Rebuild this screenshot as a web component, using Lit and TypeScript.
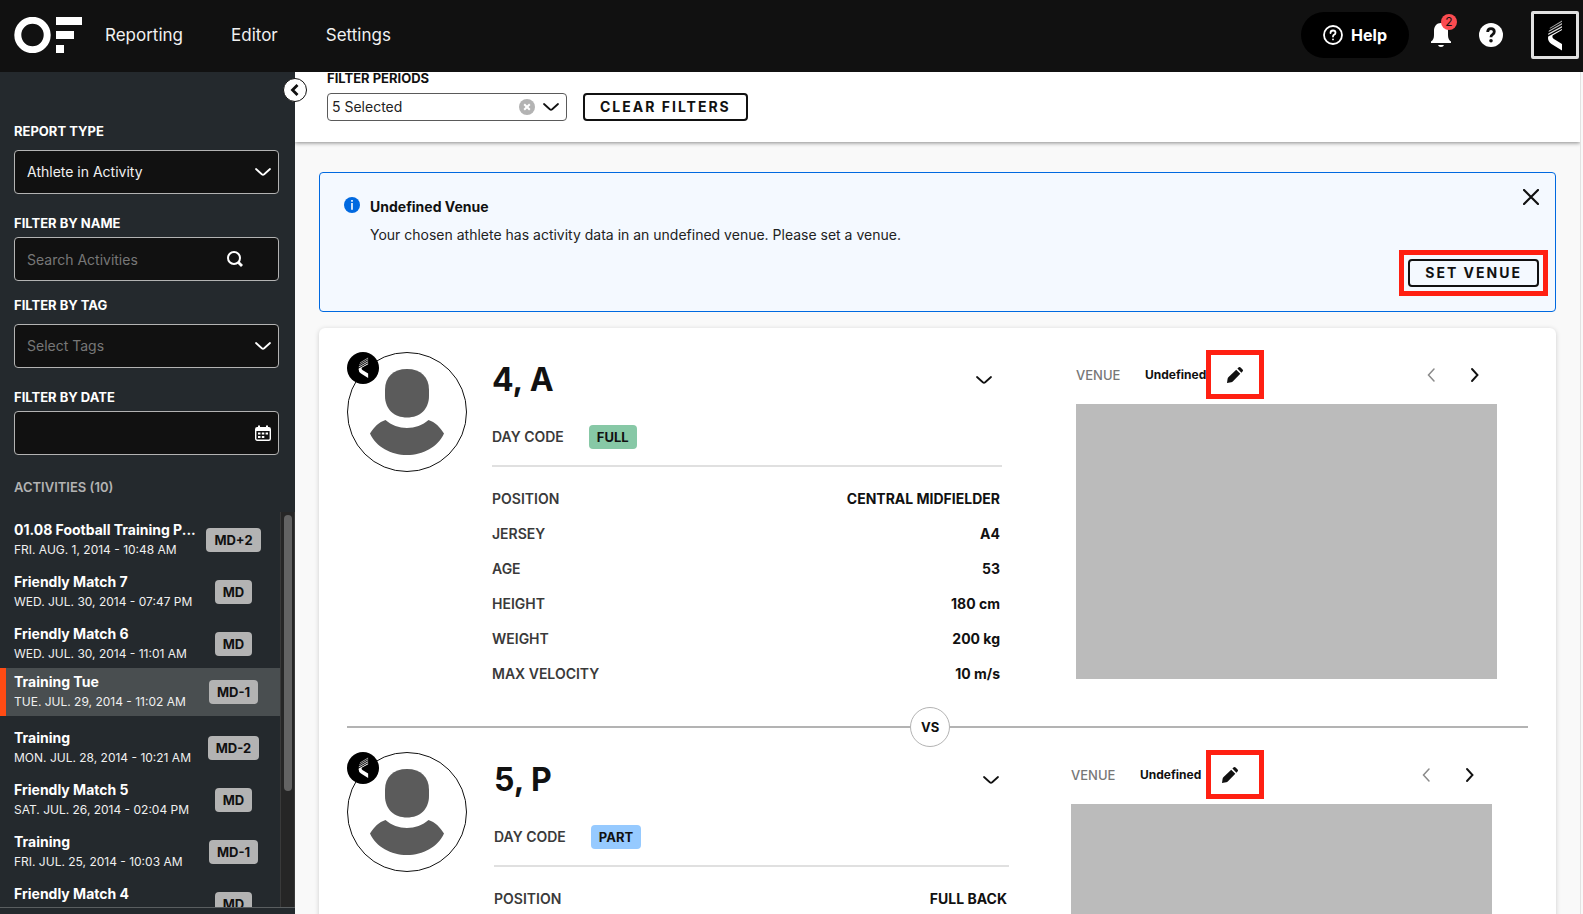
import { LitElement, html, css, svg, nothing } from "lit";
import { customElement, property } from "lit/decorators.js";
import { classMap } from "lit/directives/class-map.js";

interface Activity {
  title: string;
  date: string;
  code: string;
  selected?: boolean;
}

interface Athlete {
  name: string;
  dayCode: string;
  stats: [string, string][];
}

const activities: Activity[] = [
  { title: "01.08 Football Training P...", date: "FRI. AUG. 1, 2014 - 10:48 AM", code: "MD+2" },
  { title: "Friendly Match 7", date: "WED. JUL. 30, 2014 - 07:47 PM", code: "MD" },
  { title: "Friendly Match 6", date: "WED. JUL. 30, 2014 - 11:01 AM", code: "MD" },
  { title: "Training Tue", date: "TUE. JUL. 29, 2014 - 11:02 AM", code: "MD-1", selected: true },
  { title: "Training", date: "MON. JUL. 28, 2014 - 10:21 AM", code: "MD-2" },
  { title: "Friendly Match 5", date: "SAT. JUL. 26, 2014 - 02:04 PM", code: "MD" },
  { title: "Training", date: "FRI. JUL. 25, 2014 - 10:03 AM", code: "MD-1" },
  { title: "Friendly Match 4", date: "", code: "MD" },
];

const first: Athlete = {
  name: "4, A",
  dayCode: "FULL",
  stats: [
    ["POSITION", "CENTRAL MIDFIELDER"],
    ["JERSEY", "A4"],
    ["AGE", "53"],
    ["HEIGHT", "180 cm"],
    ["WEIGHT", "200 kg"],
    ["MAX VELOCITY", "10 m/s"],
  ],
};

const second: Athlete = {
  name: "5, P",
  dayCode: "PART",
  stats: [["POSITION", "FULL BACK"]],
};

const chevronDown = html`<svg class="icon" width="16" height="16" viewBox="0 0 16 16" aria-hidden="true">
  <path d="M1 5 L6.8 10.2 Q8 11.2 9.2 10.2 L15 5" fill="none" stroke="currentColor" stroke-width="1.800" stroke-linecap="round" />
</svg>`;

/* Feathered chevron mark of the club */
const clubMark = svg`
  <path d="M23 10 L23 11.200 L10.500 18.600 L11.500 17 Z" fill="#aaa" />
  <path d="M23 12.600 L23 14 L9.500 21.600 L10 20 Z" fill="#bbb" />
  <path d="M23 15.400 L23 17 L9.200 24.600 L9.300 23 Z" fill="#ddd" />
  <path d="M23 18.400 L23 19.600 L13.500 25 Q12.800 27 14.500 28.200 L23 33.500 L23 40 L12.500 33.500 Q9 31 9 27.500 L9.200 26 Z" fill="#fff" />`;

const shared = css`
  * {
    box-sizing: border-box;
  }
  button,
  input,
  select {
    font: inherit;
    color: inherit;
    margin: 0;
  }
  button {
    background: none;
    border: 0;
    padding: 0;
    cursor: pointer;
  }
  svg {
    display: block;
    flex: none;
  }
`;

@customElement("athlete-panel")
export class AthletePanel extends LitElement {
  @property({ attribute: false }) athlete!: Athlete;
  @property({ type: Boolean, reflect: true }) compared = false;

  static styles = [
    shared,
    css`
      :host {
        display: grid;
        grid-template-columns: 120px minmax(0, 609fr) minmax(0, 421fr);
        padding-right: 31px;
        align-items: start;
      }
      :host([compared]) {
        grid-template-columns: 120px minmax(0, 604fr) minmax(0, 421fr);
        padding-right: 36px;
      }
      .details {
        margin: 0 74px 0 25px;
      }
      :host([compared]) .details {
        margin: 0 62px 0 27px;
      }
      .avatar {
        width: 120px;
        height: 120px;
      }
      .title {
        display: flex;
        align-items: center;
        justify-content: space-between;
        height: 56px;
        padding-right: 10px;
      }
      h2 {
        margin: 0;
        font-size: 32px;
        line-height: 40px;
        font-weight: 700;
      }
      .day {
        display: flex;
        align-items: center;
        gap: 25px;
        height: 59px;
        margin-bottom: 14px;
        border-bottom: 2px solid #e0e0e0;
      }
      .day,
      dl {
        font-size: 14px;
        line-height: 20px;
        font-weight: 600;
        color: #3a3a3a;
      }
      .chip {
        padding: 2px 8px;
        border-radius: 4px;
        background: #87c8a6;
        color: #111;
        font-size: 13px;
        font-weight: 700;
      }
      .part {
        background: #96caff;
      }
      dl {
        margin: 0;
        padding: 0 2px 1px 0;
      }
      .stat {
        display: flex;
        align-items: center;
        justify-content: space-between;
        height: 35px;
      }
      dd {
        margin: 0;
        font-weight: 700;
        color: #111;
      }
      .venue {
        display: grid;
        grid-template-columns: 69px 61px 58px 1fr auto;
        align-content: center;
        align-items: center;
        height: 45px;
        margin-bottom: 7px;
        font-size: 12px;
        line-height: 20px;
        font-weight: 700;
      }
      :host([compared]) .venue {
        grid-template-columns: 69px 66px 58px 1fr auto;
      }
      .venue-label {
        color: #777;
        font-size: 13px;
        font-weight: 500;
      }
      .edit {
        display: flex;
        align-items: center;
        justify-content: center;
        height: 49px;
        border: 5px solid #ff2012;
      }
      :host([compared]) .edit {
        padding-right: 10px;
      }
      .pager {
        grid-column: 5;
        display: flex;
        gap: 28px;
        padding-right: 14px;
      }
      .prev {
        color: #8a8a8a;
      }
      .map {
        aspect-ratio: 421 / 275;
        background: #bbb;
      }
    `,
  ];

  render() {
    const a = this.athlete;
    return html`
      <svg class="avatar" viewBox="0 0 120 120" role="img" aria-label="Athlete avatar">
        <circle cx="60" cy="60" r="59.500" fill="#fff" stroke="#111" />
        <path d="M60 17 C74 17 82 25 82 38 V44 C82 57 73 65.500 60 65.500 C47 65.500 38 57 38 44 V38 C38 25 46 17 60 17 Z" fill="#5b5b5b" />
        <path d="M38.500 68 C50 78.500 70 78.500 81.500 68 C88 70 93 75 97 81.500 C91 95 76 103 60 103 C44 103 29 95 23 81.500 C27 75 32 70 38.500 68 Z" fill="#5b5b5b" />
        <circle cx="16" cy="16" r="16" fill="#000" />
        <g transform="translate(5.500 -1.200) scale(0.680)">${clubMark}</g>
      </svg>
      <div class="details">
        <div class="title">
          <h2>${a.name}</h2>
          <button aria-label="Change athlete">${chevronDown}</button>
        </div>
        <div class="day">
          <span>DAY CODE</span>
          <span class=${classMap({ chip: true, part: a.dayCode === "PART" })}>${a.dayCode}</span>
        </div>
        <dl>
          ${a.stats.map(([k, v]) => html`<div class="stat"><dt>${k}</dt><dd>${v}</dd></div>`)}
        </dl>
      </div>
      <div>
        <div class="venue">
          <span class="venue-label">VENUE</span>
          <span>Undefined</span>
          <button class="edit" aria-label="Edit venue">
            <svg width="18" height="18" viewBox="0 0 18 18">
              <path d="M1 17 L1.600 12.800 Q1.800 11.800 2.600 11 L10.200 3.700 L14.300 7.800 L7 15.200 Q6.200 16 5.200 16.200 Z M11.400 2.600 L12.800 1.200 Q13.700 0.500 14.600 1.400 L16.600 3.400 Q17.500 4.300 16.700 5.300 L15.400 6.700 Z" fill="#111" />
            </svg>
          </button>
          <div class="pager">
            <button class="prev" aria-label="Previous venue">
              <svg width="16" height="16" viewBox="0 0 16 16"><path d="M11 2 L5.500 8 L11 14" fill="none" stroke="currentColor" stroke-width="1.500" stroke-linecap="round" /></svg>
            </button>
            <button aria-label="Next venue">
              <svg width="16" height="16" viewBox="0 0 16 16"><path d="M5 2 L10.500 8 L5 14" fill="none" stroke="currentColor" stroke-width="1.900" stroke-linecap="round" /></svg>
            </button>
          </div>
        </div>
        <div class="map"></div>
      </div>
    `;
  }
}

@customElement("app-root")
export class AppRoot extends LitElement {
  static styles = [
    shared,
    css`
      :host {
        display: flex;
        flex-direction: column;
        height: 100vh;
        overflow: hidden;
        font-family: Inter, "Liberation Sans", sans-serif;
        font-size: 14px;
        line-height: 20px;
        color: #111;
        background: #f9f9f9;
      }
      header {
        display: flex;
        align-items: center;
        flex: none;
        height: 72px;
        padding: 0 4px 2px 14px;
        background: #111;
        color: #fff;
      }
      nav {
        display: flex;
        gap: 48px;
        margin-left: 23px;
        font-size: 17px;
      }
      nav a {
        color: #f0f0f0;
        text-decoration: none;
      }
      .tools {
        display: flex;
        align-items: center;
        margin-left: auto;
      }
      .help {
        display: flex;
        align-items: center;
        gap: 8px;
        height: 46px;
        padding: 0 22px;
        border-radius: 23px;
        background: #000;
        font-size: 16px;
        font-weight: 700;
      }
      .bell {
        position: relative;
        margin: 0 28px 0 22px;
      }
      .count {
        position: absolute;
        top: -9px;
        right: -6px;
        width: 16px;
        height: 16px;
        border-radius: 50%;
        background: #fb4b50;
        color: #111;
        font-size: 12px;
        line-height: 16px;
        text-align: center;
      }
      .club {
        display: flex;
        align-items: center;
        justify-content: center;
        width: 48px;
        height: 48px;
        margin-left: 28px;
        border: 3px solid #e0e0e0;
        border-radius: 2px;
        background: #000;
      }
      .body {
        display: flex;
        flex: 1;
        min-height: 0;
      }
      aside {
        position: relative;
        display: flex;
        flex-direction: column;
        flex: none;
        width: 295px;
        padding: 49px 0 6px;
        background: #24292d;
        color: #fff;
      }
      .collapse {
        position: absolute;
        z-index: 1;
        top: 6px;
        right: -12px;
        display: flex;
        align-items: center;
        justify-content: center;
        width: 24px;
        height: 24px;
        border: 1px solid #111;
        border-radius: 50%;
        background: #fff;
        color: #111;
      }
      .field {
        display: flex;
        flex-direction: column;
        gap: 4px;
        padding: 0 16px 0 14px;
        margin-bottom: 19px;
      }
      .loose {
        gap: 9px;
      }
      .tight {
        margin-bottom: 14px;
      }
      .label {
        font-size: 13px;
        font-weight: 700;
        line-height: 20px;
      }
      /* Control and its icon share one grid cell */
      .control {
        display: grid;
        align-items: center;
      }
      .control > * {
        grid-area: 1 / 1;
      }
      .control svg {
        justify-self: end;
        margin-right: 8px;
        pointer-events: none;
      }
      .control .search {
        margin-right: 36px;
      }
      .control input,
      .control select {
        appearance: none;
        width: 100%;
        height: 44px;
        padding: 0 12px;
        border: 1px solid #b3b3b3;
        border-radius: 4px;
        background: #111;
        color: #f0f0f0;
      }
      .control .empty,
      .control input::placeholder {
        color: #777;
        opacity: 1;
      }
      h3 {
        margin: 0;
        padding: 3px 14px 15px;
        font-size: 13px;
        line-height: 20px;
        font-weight: 600;
        color: #b3b3b3;
      }
      .scroller {
        display: flex;
        flex: 1;
        min-height: 0;
        overflow: hidden;
        border-bottom: 1px solid #5a5e60;
      }
      ul {
        display: flex;
        flex-direction: column;
        flex: 1;
        min-width: 0;
        margin: 0;
        padding: 0;
        list-style: none;
      }
      li {
        display: grid;
        grid-template-columns: 186px 1fr;
        align-items: center;
        flex: none;
        height: 48px;
        margin-top: 4px;
        padding: 0 13px 0 8px;
        border-left: 6px solid transparent;
      }
      li.selected {
        margin: 0 0 4px;
        border-color: #ff4b14;
        background: #494e50;
      }
      .name {
        font-weight: 700;
        white-space: nowrap;
      }
      .date {
        min-height: 20px;
        font-size: 12px;
        line-height: 20px;
        white-space: nowrap;
        color: #f0f0f0;
      }
      .code {
        justify-self: center;
        padding: 2px 8px;
        border-radius: 4px;
        background: #b3b3b3;
        color: #111;
        font-size: 13px;
        line-height: 20px;
        font-weight: 700;
      }
      .track {
        width: 15px;
        padding: 3px 3px 0;
        border-left: 1px solid #3a3a3a;
        border-right: 1px solid #3a3a3a;
        background: #262626;
      }
      .thumb {
        width: 8px;
        height: 276px;
        border-radius: 4px;
        background: #636363;
      }
      main {
        flex: 1;
        min-width: 0;
        margin-right: 2px;
        border-right: 1px solid #e2e2e2;
        overflow: hidden;
      }
      .filters {
        display: grid;
        grid-template-columns: 240px auto;
        justify-content: start;
        column-gap: 16px;
        row-gap: 8px;
        padding: 0 32px 21px;
        background: #fff;
        box-shadow: 0 1px 4px rgba(0, 0, 0, 0.45);
      }
      .filters .label {
        grid-column: 1 / 3;
        line-height: 13px;
      }
      .filters .control select {
        height: 28px;
        padding: 0 4px;
        border-color: #5a5a5a;
        background: #fff;
        color: #222;
      }
      .filters .control .clear {
        margin-right: 32px;
      }
      .outline {
        display: block;
        height: 28px;
        padding: 0 15px;
        border: 2px solid #111;
        border-radius: 4px;
        font-weight: 700;
        letter-spacing: 2px;
        line-height: 20px;
      }
      .content {
        display: flex;
        flex-direction: column;
        gap: 16px;
        padding: 30px 24px 0;
      }
      .alert {
        display: grid;
        grid-template-columns: 16px 1fr auto;
        column-gap: 10px;
        padding: 16px 16px 24px 24px;
        border: 1px solid #0069e0;
        border-radius: 4px;
        background: #f4f9ff;
      }
      .info {
        margin-top: 8px;
      }
      .message {
        padding-top: 8px;
      }
      .message p {
        margin: 0 0 8px;
        color: #222;
      }
      .message .heading {
        font-weight: 700;
        color: #111;
      }
      .alert .close {
        justify-self: end;
        align-self: start;
      }
      .marked {
        grid-column: 1 / 4;
        justify-self: end;
        margin-top: 6px;
        outline: 5px solid #ff2012;
        outline-offset: 4px;
      }
      .card {
        padding: 24px 28px;
        border-radius: 6px;
        background: #fff;
        box-shadow: 0 1px 5px rgba(0, 0, 0, 0.18);
      }
      .versus {
        display: flex;
        align-items: center;
        margin: 15px 0 5px;
      }
      .line {
        flex: 38;
        height: 2px;
        background: #b3b3b3;
      }
      .line.after {
        flex: 39;
      }
      .vs {
        width: 40px;
        height: 40px;
        border: 1px solid #b3b3b3;
        border-radius: 50%;
        font-size: 13px;
        line-height: 38px;
        font-weight: 700;
        text-align: center;
      }
    `,
  ];

  render() {
    return html`
      <header>
        <svg width="68" height="36" viewBox="0 0 68 36" role="img" aria-label="OF">
          <circle cx="18.500" cy="18" r="14.700" fill="none" stroke="#fff" stroke-width="7" />
          <path d="M42 0 H68 V8 H42 Z M42 14 H60 V22 H42 Z M42 28 H50 V36 H42 Z" fill="#fff" />
        </svg>
        <nav>
          <a href="#reporting">Reporting</a>
          <a href="#editor">Editor</a>
          <a href="#settings">Settings</a>
        </nav>
        <div class="tools">
          <button class="help">
            <svg width="20" height="20" viewBox="0 0 20 20" fill="none" stroke="#fff" stroke-width="1.800" stroke-linecap="round">
              <circle cx="10" cy="10" r="9" />
              <path d="M7.500 8 Q7.500 5.500 10 5.500 Q12.500 5.500 12.500 7.700 Q12.500 9 11 9.800 Q10 10.400 10 11.500 M10 14.300 V14.400" />
            </svg>
            Help
          </button>
          <button class="bell" aria-label="Notifications">
            <svg width="20" height="24" viewBox="0 0 20 24" fill="#fff">
              <path d="M10 0 C14.500 0 17 3.500 17 8 V12 C17 15 18 17.500 20 18.500 V20 H0 V18.500 C2 17.500 3 15 3 12 V8 C3 3.500 5.500 0 10 0 Z M7 22 H13 Q12.500 24 10 24 Q7.500 24 7 22 Z" />
            </svg>
            <span class="count">2</span>
          </button>
          <button aria-label="Support">
            <svg width="24" height="24" viewBox="0 0 24 24">
              <circle cx="12" cy="12" r="12" fill="#fff" />
              <path d="M8.700 9 Q8.700 5.700 12 5.700 Q15.300 5.700 15.300 8.800 Q15.300 10.500 13.500 11.600 Q12 12.500 12 14.200" fill="none" stroke="#111" stroke-width="2.800" />
              <circle cx="12" cy="17.700" r="1.800" fill="#111" />
            </svg>
          </button>
          <button class="club" aria-label="Club account">
            <svg width="32" height="42" viewBox="0 3.500 32 42">${clubMark}</svg>
          </button>
        </div>
      </header>
      <div class="body">
        <aside>
          <button class="collapse" aria-label="Collapse sidebar">
            <svg width="12" height="14" viewBox="0 0 12 14"><path d="M8.500 2 L3.500 7 L8.500 12" fill="none" stroke="currentColor" stroke-width="2.800" /></svg>
          </button>
          <div class="field loose">
            <label class="label" for="type">REPORT TYPE</label>
            <div class="control">
              <select id="type"><option>Athlete in Activity</option></select>
              ${chevronDown}
            </div>
          </div>
          <div class="field tight">
            <label class="label" for="name">FILTER BY NAME</label>
            <div class="control">
              <input id="name" type="text" placeholder="Search Activities" />
              <svg class="search" width="16" height="16" viewBox="0 0 16 16" fill="none" stroke="#fff">
                <circle cx="7" cy="7" r="6" stroke-width="2" />
                <path d="M11 11 L15 15" stroke-width="2.800" />
              </svg>
            </div>
          </div>
          <div class="field loose">
            <label class="label" for="tag">FILTER BY TAG</label>
            <div class="control">
              <select id="tag" class="empty"><option>Select Tags</option></select>
              ${chevronDown}
            </div>
          </div>
          <div class="field">
            <label class="label" for="date">FILTER BY DATE</label>
            <div class="control">
              <input id="date" type="text" />
              <svg width="16" height="16" viewBox="0 0 16 16">
                <rect x="0.700" y="2.700" width="14.600" height="12.600" rx="1.500" fill="none" stroke="#fff" stroke-width="1.400" />
                <path d="M1 3 H15 V6 H1 Z M3 0.500 H5 V3 H3 Z M11 0.500 H13 V3 H11 Z M3 7.500 H5.500 V9.500 H3 Z M6.800 7.500 H9.300 V9.500 H6.800 Z M10.600 7.500 H13 V9.500 H10.600 Z M3 11 H5.500 V13 H3 Z M6.800 11 H9.300 V13 H6.800 Z" fill="#fff" />
              </svg>
            </div>
          </div>
          <h3>ACTIVITIES (10)</h3>
          <div class="scroller">
            <ul>
              ${activities.map(
                (a) => html`<li class=${a.selected ? "selected" : nothing}>
                  <div>
                    <div class="name">${a.title}</div>
                    <div class="date">${a.date}</div>
                  </div>
                  <span class="code">${a.code}</span>
                </li>`
              )}
            </ul>
            <div class="track"><div class="thumb"></div></div>
          </div>
        </aside>
        <main>
          <div class="filters">
            <label class="label" for="periods">FILTER PERIODS</label>
            <div class="control">
              <select id="periods"><option>5 Selected</option></select>
              <svg class="clear" width="16" height="16" viewBox="0 0 16 16">
                <circle cx="8" cy="8" r="8" fill="#b3b3b3" />
                <path d="M5.200 5.200 L10.800 10.800 M10.800 5.200 L5.200 10.800" stroke="#fff" stroke-width="2" />
              </svg>
              ${chevronDown}
            </div>
            <button class="outline">CLEAR FILTERS</button>
          </div>
          <div class="content">
            <section class="alert">
              <svg class="info" width="16" height="16" viewBox="0 0 16 16">
                <circle cx="8" cy="8" r="8" fill="#0069e0" />
                <path d="M8 3 V4.800 M8 6 V12.800" stroke="#fff" stroke-width="1.600" />
              </svg>
              <div class="message">
                <p class="heading">Undefined Venue</p>
                <p>Your chosen athlete has activity data in an undefined venue. Please set a venue.</p>
              </div>
              <button class="close" aria-label="Dismiss">
                <svg width="16" height="16" viewBox="0 0 16 16"><path d="M1 1 L15 15 M15 1 L1 15" stroke="#111" stroke-width="2.200" stroke-linecap="round" /></svg>
              </button>
              <div class="marked"><button class="outline">SET VENUE</button></div>
            </section>
            <section class="card">
              <athlete-panel .athlete=${first}></athlete-panel>
              <div class="versus">
                <span class="line"></span><span class="vs">VS</span><span class="line after"></span>
              </div>
              <athlete-panel compared .athlete=${second}></athlete-panel>
            </section>
          </div>
        </main>
      </div>
    `;
  }
}
